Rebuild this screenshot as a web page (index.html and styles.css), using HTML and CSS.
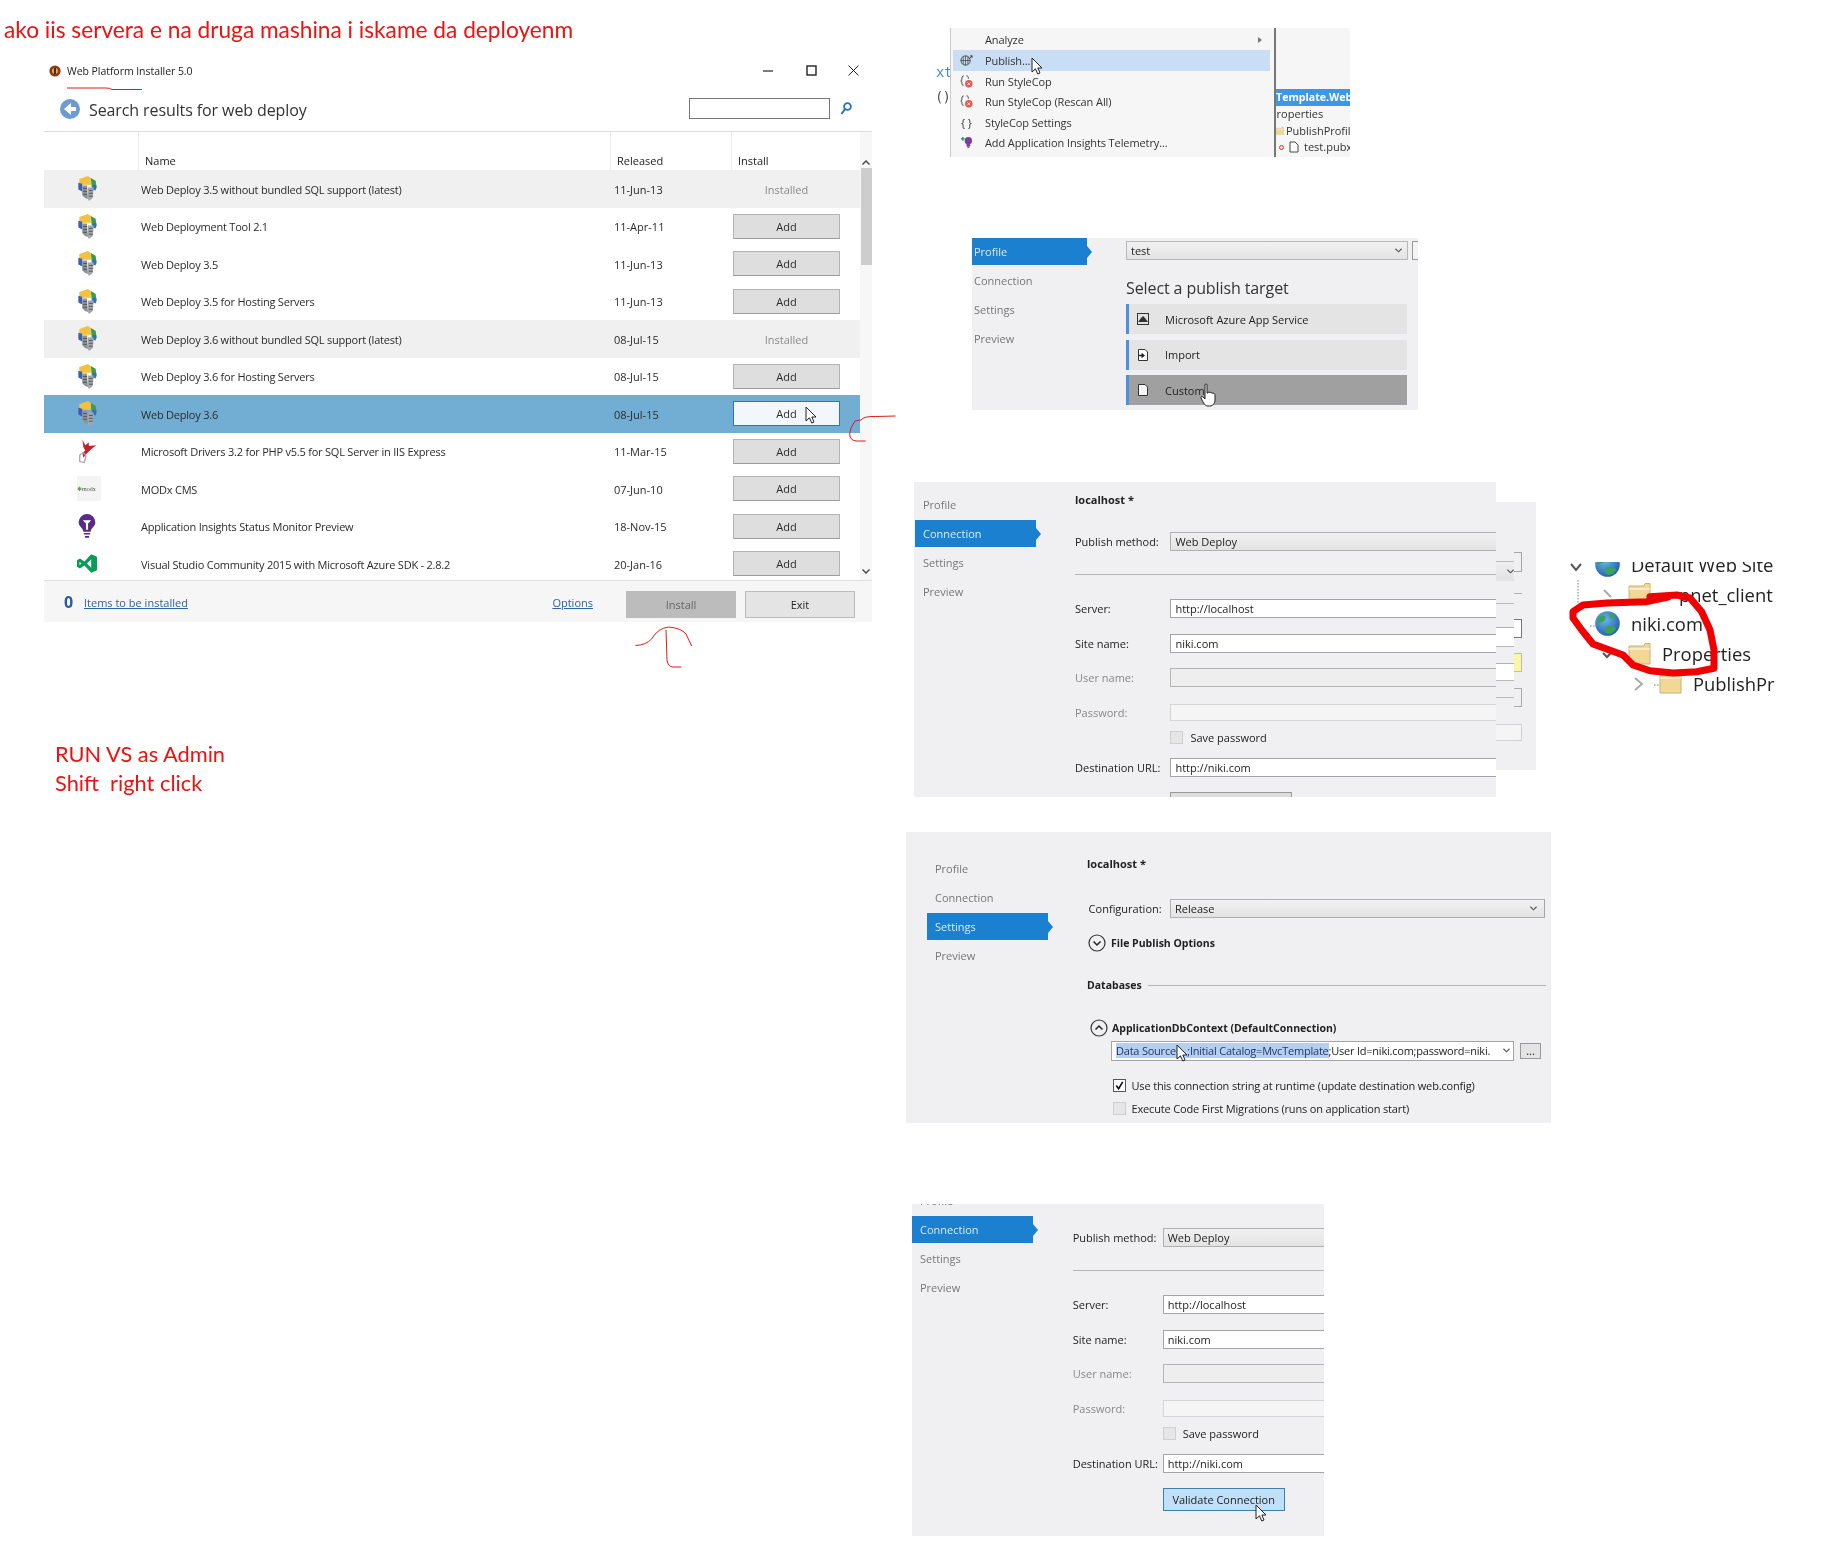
FILE: index.html
```html
<!DOCTYPE html>
<html lang="en">
<head>
<meta charset="utf-8">
<title>Deploy notes</title>
<link rel="stylesheet" href="styles.css">
</head>
<body>
<svg class="defs" width="0" height="0" aria-hidden="true">
  <defs>
    <radialGradient id="gl" cx="40%" cy="35%" r="70%"><stop offset="0" stop-color="#6db4ea"/><stop offset="1" stop-color="#1f5fae"/></radialGradient>
    <symbol id="deploy" viewBox="0 0 20 26">
      <path d="M2 3 L11 0 L14 2 L14 9 L5 9 L2 7Z" fill="#f2c23c"/>
      <path d="M14 2 L19 5 L20 13 L15 13Z" fill="#3f9a4a"/>
      <path d="M1 7 L5 8 L5 16 L1 14Z" fill="#3c5fb0"/>
      <path d="M16 9 L20 10 L19 15 L16 14Z" fill="#2f6fc0"/>
      <path d="M5 10 H10 L11 24 L8 23 L5 20Z" fill="#8d9296"/>
      <path d="M11 12 H17 L16 23 L12 26 L11 24Z" fill="#a3a7aa"/>
      <path d="M6 13 H10 M6 16 H10 M6 19 H10 M12 15 H16 M12 18 H16 M12 21 H16" stroke="#4f5357" stroke-width="1"/>
    </symbol>
    <symbol id="splat" viewBox="0 0 22 26">
      <path d="M6 0 L9 6 L13 3 L13 7 L21 6 L15 11 L11 15 L7 20 L6 15 L9 12 L7 8Z" fill="#c6202e"/>
      <path d="M3 17 L7 14 L10 18 L8 25 L3 24Z" fill="none" stroke="#a8a8a8" stroke-width="1.4"/>
    </symbol>
    <symbol id="bulb" viewBox="0 0 16 24">
      <path d="M8 0 A8 8 0 0 1 16 8 C16 12 12 13 11.5 17 H4.5 C4 13 0 12 0 8 A8 8 0 0 1 8 0Z" fill="#5a2a86"/>
      <path d="M4 6 H12 L9 9 V15 H7 V9Z" fill="#fff"/>
      <path d="M5 19 H11 M6 22 H10" stroke="#5a2a86" stroke-width="1.6"/>
    </symbol>
    <symbol id="vs" viewBox="0 0 24 22">
      <path fill-rule="evenodd" fill="#0b9a58" d="M17 0 L24 3 V19 L17 22 L9 13.5 L3.5 17 L0 15 V7 L3.5 5 L9 8.5Z M17 6 L12 11 L17 16Z M3 9 V13 L5.5 11Z"/>
    </symbol>
    <symbol id="cursor" viewBox="0 0 12 18">
      <path d="M1 1 V15 L4.4 11.8 L6.8 17 L9 16 L6.8 11 H11Z" fill="#fff" stroke="#222" stroke-width="1"/>
    </symbol>
    <symbol id="hand" viewBox="0 0 16 24">
      <path d="M5 2 C5 0.5 7 0.5 7 2 V10 L8 10 C8 8.5 10 8.5 10 10 C10 9 12 9 12 10.5 C12 10 15 10 15 12 V17 C15 20 13 23 10 23 H8 C5 23 4 21 1 15 C0.5 13.5 2 13 3 14 L5 16Z" fill="#fff" stroke="#222" stroke-width="1"/>
    </symbol>
    <symbol id="globe" viewBox="0 0 25 25">
      <circle cx="12.5" cy="12.5" r="12.3" fill="url(#gl)"/>
      <path d="M4 6 C8 3 12 5 10 9 C8 12 5 10 4 13 C2 11 3 8 4 6Z M14 2 C18 3 20 5 20 8 C17 9 14 6 14 2Z M10 16 C14 14 20 14 21 18 C18 23 13 24 10 21Z" fill="#3aa35a"/>
    </symbol>
    <symbol id="folder" viewBox="0 0 23 22">
      <path d="M1 3 H16 L17 0.5 H22 V21 H1Z" fill="#f2d795" stroke="#c9b27a" stroke-width="1"/>
      <path d="M1 6 H22" stroke="#fff" stroke-width="1"/>
    </symbol>
    <symbol id="chev-d" viewBox="0 0 18 18">
      <circle cx="9" cy="9" r="8" fill="none" stroke="#333" stroke-width="1.2"/>
      <path d="M5.5 7.5 L9 11 L12.5 7.5" fill="none" stroke="#222" stroke-width="1.5"/>
    </symbol>
    <symbol id="chev-u" viewBox="0 0 18 18">
      <circle cx="9" cy="9" r="8" fill="none" stroke="#333" stroke-width="1.2"/>
      <path d="M5.5 10.5 L9 7 L12.5 10.5" fill="none" stroke="#222" stroke-width="1.5"/>
    </symbol>
    <symbol id="stylecop" viewBox="0 0 14 14">
      <path d="M4 1 C2 1 2 3 2 5 L1 6.5 L2 8 C2 10 2 11 4 11" fill="none" stroke="#333" stroke-width="1"/>
      <path d="M7 1 C9 1 9 2 9 4" fill="none" stroke="#333" stroke-width="1"/>
      <circle cx="9.5" cy="9.5" r="4" fill="#e4574f"/>
      <path d="M8 8 L11 11 M11 8 L8 11" stroke="#fff" stroke-width="1"/>
    </symbol>
    <symbol id="dd" viewBox="0 0 8 5">
      <path d="M.5 .5 L4 4 L7.5 .5" fill="none" stroke="#555" stroke-width="1.3"/>
    </symbol>
  </defs>
</svg>

<main class="canvas">
  <p class="note note-top">ako iis servera e na druga mashina i iskame da deployenm</p>
  <p class="note note-admin">RUN VS as Admin<br>Shift&nbsp; right click</p>

  <!-- Web Platform Installer -->
  <section class="shot win">
    <header class="win-title">
      <svg class="win-logo" viewBox="0 0 12 12"><circle cx="6" cy="6" r="5.6" fill="#8a3b12"/><circle cx="6" cy="6" r="3" fill="#e9a25d"/><path d="M6 3 V9" stroke="#5b240a" stroke-width="2"/></svg>
      <span class="win-name">Web Platform Installer 5.0</span>
      <span class="win-controls">
        <svg width="11" height="11" viewBox="0 0 11 11"><path d="M0 6 H10" stroke="#222" stroke-width="1.2"/></svg>
        <svg width="11" height="11" viewBox="0 0 11 11"><rect x="1" y="1" width="9" height="9" fill="none" stroke="#222" stroke-width="1.4"/></svg>
        <svg width="11" height="11" viewBox="0 0 11 11"><path d="M0.5 0.5 L10.5 10.5 M10.5 0.5 L0.5 10.5" stroke="#222" stroke-width="1"/></svg>
      </span>
    </header>
    <div class="win-head">
      <svg class="back" viewBox="0 0 20 20"><circle cx="10" cy="10" r="10" fill="#6b9bd0"/><path d="M11 4 V8 H16 V12 H11 V16 L4 10Z" fill="#fff"/></svg>
      <h1 class="win-h">Search results for web deploy</h1>
      <span class="search-box"></span>
      <svg class="mag" viewBox="0 0 12 13"><circle cx="7.5" cy="4.5" r="3.4" fill="none" stroke="#2a6fb0" stroke-width="1.8"/><path d="M5 7 L1.5 12" stroke="#2a6fb0" stroke-width="2"/></svg>
    </div>
    <div class="win-body">
      <div class="table">
        <div class="thead"><span class="th th-blank"></span><span class="th">Name</span><span class="th">Released</span><span class="th">Install</span></div>
        <div class="tbody">
          <div class="tr tr-done"><svg class="ic"><use href="#deploy"/></svg><span class="nm">Web Deploy 3.5 without bundled SQL support (latest)</span><span class="dt">11-Jun-13</span><span class="installed">Installed</span></div>
          <div class="tr"><svg class="ic"><use href="#deploy"/></svg><span class="nm">Web Deployment Tool 2.1</span><span class="dt">11-Apr-11</span><button class="add">Add</button></div>
          <div class="tr"><svg class="ic"><use href="#deploy"/></svg><span class="nm">Web Deploy 3.5</span><span class="dt">11-Jun-13</span><button class="add">Add</button></div>
          <div class="tr"><svg class="ic"><use href="#deploy"/></svg><span class="nm">Web Deploy 3.5 for Hosting Servers</span><span class="dt">11-Jun-13</span><button class="add">Add</button></div>
          <div class="tr tr-done"><svg class="ic"><use href="#deploy"/></svg><span class="nm">Web Deploy 3.6 without bundled SQL support (latest)</span><span class="dt">08-Jul-15</span><span class="installed">Installed</span></div>
          <div class="tr"><svg class="ic"><use href="#deploy"/></svg><span class="nm">Web Deploy 3.6 for Hosting Servers</span><span class="dt">08-Jul-15</span><button class="add">Add</button></div>
          <div class="tr tr-sel"><svg class="ic"><use href="#deploy"/></svg><span class="nm">Web Deploy 3.6</span><span class="dt">08-Jul-15</span><button class="add add-sel">Add</button></div>
          <div class="tr"><svg class="ic"><use href="#splat"/></svg><span class="nm">Microsoft Drivers 3.2 for PHP v5.5 for SQL Server in IIS Express</span><span class="dt">11-Mar-15</span><button class="add">Add</button></div>
          <div class="tr"><span class="modx"><i>&#10033;</i>modx</span><span class="nm">MODx CMS</span><span class="dt">07-Jun-10</span><button class="add">Add</button></div>
          <div class="tr"><svg class="ic"><use href="#bulb"/></svg><span class="nm">Application Insights Status Monitor Preview</span><span class="dt">18-Nov-15</span><button class="add">Add</button></div>
          <div class="tr"><svg class="ic"><use href="#vs"/></svg><span class="nm">Visual Studio Community 2015 with Microsoft Azure SDK - 2.8.2</span><span class="dt">20-Jan-16</span><button class="add">Add</button></div>
        </div>
      </div>
      <div class="sbar">
        <svg class="sarrow" viewBox="0 0 8 5"><path d="M0.5 4.5 L4 1 L7.5 4.5" fill="none" stroke="#444" stroke-width="1.4"/></svg>
        <span class="sthumb"></span>
        <svg class="sarrow sarrow-end" viewBox="0 0 8 5"><path d="M0.5 0.5 L4 4 L7.5 0.5" fill="none" stroke="#444" stroke-width="1.4"/></svg>
      </div>
    </div>
    <footer class="win-foot">
      <b class="count">0</b>
      <a class="link">Items to be installed</a>
      <a class="link link-opt">Options</a>
      <button class="fbtn fbtn-off">Install</button>
      <button class="fbtn">Exit</button>
    </footer>
  </section>

  <!-- Context menu -->
  <section class="shot ctx">
    <div class="ctx-code"><span>xt</span><span>()</span></div>
    <ul class="menu">
      <li class="mi"><span></span><span>Analyze</span><i class="sub"></i></li>
      <li class="mi mi-hot"><svg class="mic" viewBox="0 0 14 14"><circle cx="6" cy="7" r="5" fill="none" stroke="#444"/><path d="M1 7 H11 M6 2 V12 M3.5 3 V11 M8.5 3 V11" stroke="#444" stroke-width=".8"/><path d="M10 5 L13 2 M11 2 H13 V4" stroke="#333" fill="none"/></svg><span>Publish...</span></li>
      <li class="mi"><svg class="mic"><use href="#stylecop"/></svg><span>Run StyleCop</span></li>
      <li class="mi"><svg class="mic"><use href="#stylecop"/></svg><span>Run StyleCop (Rescan All)</span></li>
      <li class="mi"><span class="mic mic-b">{ }</span><span>StyleCop Settings</span></li>
      <li class="mi"><svg class="mic" viewBox="0 0 14 14"><path d="M1 3 H5 M3 1 V5" stroke="#2c9a4b" stroke-width="1.4"/><circle cx="9" cy="5" r="4" fill="#7b3fa0"/><path d="M7.5 9 H10.5 V11 H7.5Z M8 12.5 H10" fill="#7b3fa0" stroke="#7b3fa0"/></svg><span>Add Application Insights Telemetry...</span></li>
    </ul>
    <div class="tree-mini">
      <span class="tm-sel">Template.Web</span>
      <span class="tm-props">Properties</span>
      <span class="tm-item"><svg class="tm-fold"><use href="#folder"/></svg>PublishProfil</span>
      <span class="tm-file"><i class="dot"></i><svg class="tm-page" viewBox="0 0 11 12"><path d="M2 1 H7 L10 4 V11 H2Z" fill="#fff" stroke="#444"/></svg>test.pubx</span>
    </div>
  </section>

  <!-- Publish target -->
  <section class="shot pub p-target">
    <nav class="nav">
      <span class="nav-i nav-on">Profile</span>
      <span class="nav-i">Connection</span>
      <span class="nav-i">Settings</span>
      <span class="nav-i">Preview</span>
    </nav>
    <div class="target">
      <div class="t-top"><span class="field field-sel t-combo">test<svg class="dd"><use href="#dd"/></svg></span><span class="t-new"></span></div>
      <h2 class="t-h">Select a publish target</h2>
      <div class="card"><svg class="card-ic" viewBox="0 0 12 12"><rect x=".5" y=".5" width="11" height="11" fill="#e3e3e3" stroke="#333"/><path d="M1 9 L4 5 L6 3 L8 5 L11 9Z" fill="#333"/></svg><span>Microsoft Azure App Service</span></div>
      <div class="card"><svg class="card-ic" viewBox="0 0 12 12"><path d="M1.5 .5 H8 L10.5 3 V11.5 H1.5Z" fill="#fff" stroke="#333"/><path d="M2 6.5 H6 M4.5 4.5 L7 6.5 L4.5 8.5" stroke="#222" stroke-width="1.3" fill="none"/></svg><span>Import</span></div>
      <div class="card card-on"><svg class="card-ic" viewBox="0 0 12 12"><path d="M1.5 .5 H8 L10.5 3 V11.5 H1.5Z" fill="#f5f5f5" stroke="#333"/></svg><span>Custom</span></div>
    </div>
  </section>

  <!-- Connection (behind) -->
  <section class="shot back-panel">
    <div class="bp-col bp-left">
      <span class="frag bl1"><svg class="dd"><use href="#dd"/></svg></span>
      <span class="frag bl2"></span>
      <span class="frag bl3"></span>
      <span class="frag bl4"></span>
      <span class="frag bl5"></span>
      <span class="frag bl6"></span>
    </div>
    <div class="bp-col bp-right">
      <span class="frag br1"></span>
      <span class="frag br2"></span>
      <span class="frag br3"></span>
      <span class="frag br4"></span>
      <span class="frag br5"></span>
      <span class="frag br6"></span>
    </div>
  </section>

  <!-- Connection -->
  <section class="shot pub p-conn">
    <nav class="nav">
      <span class="nav-i">Profile</span>
      <span class="nav-i nav-on">Connection</span>
      <span class="nav-i">Settings</span>
      <span class="nav-i">Preview</span>
    </nav>
    <div class="form">
      <h2 class="f-title">localhost *</h2>
      <div class="f-row"><label>Publish method:</label><span class="field field-sel">Web Deploy</span></div>
      <hr class="f-line">
      <div class="f-row f-server"><label>Server:</label><span class="field">http://localhost</span></div>
      <div class="f-row"><label>Site name:</label><span class="field">niki.com</span></div>
      <div class="f-row f-off"><label>User name:</label><span class="field field-off"></span></div>
      <div class="f-row f-off f-pass"><label>Password:</label><span class="field field-off2"></span></div>
      <div class="f-save"><span class="check"></span><span>Save password</span></div>
      <div class="f-row f-dest"><label>Destination URL:</label><span class="field">http://niki.com</span></div>
      <div class="f-btnrow"><span class="vbtn vbtn-cut"></span></div>
    </div>
  </section>

  <!-- Settings -->
  <section class="shot pub p-set">
    <nav class="nav">
      <span class="nav-i">Profile</span>
      <span class="nav-i">Connection</span>
      <span class="nav-i nav-on">Settings</span>
      <span class="nav-i">Preview</span>
    </nav>
    <div class="set">
      <h2 class="f-title">localhost *</h2>
      <div class="s-conf"><label>Configuration:</label><span class="field field-sel">Release<svg class="dd"><use href="#dd"/></svg></span></div>
      <div class="s-exp"><svg width="18" height="18"><use href="#chev-d"/></svg><b>File Publish Options</b></div>
      <div class="s-db"><b>Databases</b><hr></div>
      <div class="s-ctx"><svg width="18" height="18"><use href="#chev-u"/></svg><b>ApplicationDbContext (DefaultConnection)</b></div>
      <div class="s-conn">
        <span class="field s-str"><span class="s-text"><mark>Data Source=&nbsp;&nbsp;;Initial Catalog=MvcTemplate</mark>;User Id=niki.com;password=niki.</span><svg class="dd"><use href="#dd"/></svg></span>
        <span class="dots">...</span>
      </div>
      <div class="s-chk"><span class="check check-on"><svg viewBox="0 0 12 12"><path d="M2.5 6 L5 9.5 L9.5 2" fill="none" stroke="#111" stroke-width="1.8"/></svg></span><span>Use this connection string at runtime (update destination web.config)</span></div>
      <div class="s-chk s-chk2"><span class="check"></span><span>Execute Code First Migrations (runs on application start)</span></div>
    </div>
  </section>

  <!-- Validate -->
  <section class="shot pub p-val">
    <nav class="nav">
      <span class="nav-i">Profile</span>
      <span class="nav-i nav-on">Connection</span>
      <span class="nav-i">Settings</span>
      <span class="nav-i">Preview</span>
    </nav>
    <div class="form">
      <div class="f-row"><label>Publish method:</label><span class="field field-sel">Web Deploy</span></div>
      <hr class="f-line">
      <div class="f-row f-server"><label>Server:</label><span class="field">http://localhost</span></div>
      <div class="f-row"><label>Site name:</label><span class="field">niki.com</span></div>
      <div class="f-row f-off"><label>User name:</label><span class="field field-off"></span></div>
      <div class="f-row f-off f-pass"><label>Password:</label><span class="field field-off2"></span></div>
      <div class="f-save"><span class="check"></span><span>Save password</span></div>
      <div class="f-row f-dest"><label>Destination URL:</label><span class="field">http://niki.com</span></div>
      <div class="f-btnrow"><span class="vbtn">Validate Connection</span></div>
    </div>
  </section>

  <!-- IIS tree -->
  <section class="shot iis">
    <div class="iis-row r0"><svg class="globe"><use href="#globe"/></svg><span>Default Web Site</span></div>
    <div class="iis-row r1"><svg class="fold"><use href="#folder"/></svg><span>pnet_client</span></div>
    <div class="iis-row r2"><svg class="globe"><use href="#globe"/></svg><span>niki.com</span></div>
    <div class="iis-row r3"><svg class="fold"><use href="#folder"/></svg><span>Properties</span></div>
    <div class="iis-row r4"><svg class="fold"><use href="#folder"/></svg><span>PublishPr</span></div>
  </section>

  <!-- Pointers -->
  <svg class="ptr ptr-add"><use href="#cursor"/></svg>
  <svg class="ptr ptr-pub"><use href="#cursor"/></svg>
  <svg class="ptr ptr-hand"><use href="#hand"/></svg>
  <svg class="ptr ptr-data"><use href="#cursor"/></svg>
  <svg class="ptr ptr-val"><use href="#cursor"/></svg>

  <!-- Red pen annotations and tree connectors -->
  <svg class="pen" viewBox="0 0 1844 1552">
    <path class="tree-dark" d="M1571 564 L1576 570 L1581 564"/>
    <path class="tree-dots" d="M1578 580 V604 M1590 626 H1595 M1654 685 H1659"/>
    <path class="tree-grey" d="M1604 590 L1611 597 M1635 678 L1642 684 L1635 690"/>
    <path class="tree-dark" d="M1603 653 L1607 657 L1611 653"/>
    <path class="thin" d="M67 88 H106 Q110 88 112 89.5 H142"/>
    <path class="thin" d="M635.5 645.5 Q646 645 651.6 639 Q658 628 668.8 627 Q681 628 686 634 L691.7 646"/>
    <path class="thin" d="M666 630 L667 660 Q668 667 673 667 L681.4 667"/>
    <path class="thin" d="M895.5 416 L875.4 416.5 Q864 416 861 420 L855 421 Q850 428 849.6 434 Q850 441 857 441 L865.7 441"/>
    <path class="thick" d="M1650 596.7 L1676.7 595 L1690 598 L1701.7 611.7 L1710 630 L1714 650 L1714 668.3 L1696.7 671.7 L1673 673 L1650 670.7 L1633 665 L1623 655 L1606.7 649 L1593 644 L1581.7 630 L1573 618 L1573 611.7 L1583 605 L1606.7 603 L1646.7 601.7 L1668 597"/>
  </svg>
</main>
</body>
</html>
```

FILE: styles.css
```css
* { box-sizing: border-box; }
html, body { margin: 0; padding: 0; background: #fff; }
body { font-family: "Open Sans", "Noto Sans", sans-serif; font-size: 11px; color: #222; }
.defs { position: absolute; }
.canvas { position: relative; width: 1844px; height: 1552px; overflow: hidden; }
p, h1, h2, ul { margin: 0; padding: 0; font-weight: normal; }
hr { margin: 0; border: 0; }
button { font: inherit; color: inherit; padding: 0; }
label { display: block; }

.note { position: absolute; font-family: "Lato", "Liberation Sans", sans-serif; color: #ee1111; white-space: nowrap; filter: blur(.25px); }
.note-top { left: 4px; top: 17px; line-height: 26px; font-size: 22.7px; }
.note-admin { left: 55px; top: 739px; line-height: 29px; font-size: 21.8px; }

.shot { position: absolute; overflow: hidden; filter: blur(.3px); }

/* Web Platform Installer */
.win { left: 44px; top: 60px; width: 828px; height: 562px; display: flex; flex-direction: column; background: #fff; }
.win-title { height: 21px; padding: 0 13px 0 5px; display: flex; align-items: center; gap: 6px; }
.win-logo { width: 12px; height: 12px; flex: none; }
.win-name { font-size: 10.5px; letter-spacing: -.05px; }
.win-controls { margin-left: auto; display: flex; gap: 31.5px; }
.win-head { height: 51px; padding: 9px 20px 4px 16px; display: flex; align-items: center; border-bottom: 1px solid #dcdcdc; }
.back { width: 20px; height: 20px; flex: none; }
.win-h { font-size: 16px; margin: 3px 0 0 9px; color: #333; letter-spacing: -.1px; }
.search-box { margin-left: auto; width: 141px; height: 21px; border: 1px solid #777; background: #fff; }
.mag { width: 12px; height: 13px; margin-left: 10px; }
.win-body { flex: 1; display: flex; min-height: 0; }
.table { width: 816px; display: flex; flex-direction: column; }
.thead { height: 38px; display: grid; grid-template-columns: 94px 472px 121px 1fr; align-items: stretch; }
.th { border-left: 1px solid #ececec; padding: 19px 0 0 6px; line-height: 20px; }
.th-blank { border: 0; }
.tbody { flex: 1; overflow: hidden; }
.tr { height: 37.5px; display: grid; grid-template-columns: 97px 473px 119px 107px; align-items: center; color: #2b2b2b; }
.tr-done { background: #f0f0f1; }
.tr-sel { background: #72aed4; }
.nm { letter-spacing: -.22px; padding-top: 1px; white-space: nowrap; }
.dt { padding-top: 1px; }
.ic { width: 20px; height: 25px; margin-left: 32.5px; }
.modx { margin-left: 33px; width: 24px; height: 25px; background: #f4f4f4; font-size: 6px; display: flex; align-items: center; font-family: "Liberation Serif", serif; color: #555; }
.modx i { color: #5aa33c; font-style: normal; }
.installed { text-align: center; color: #8a8a8a; padding-top: 1px; }
.add { height: 25px; width: 107px; background: #dedede; border: 1px solid #b4b4b4; border-bottom-color: #9c9c9c; }
.add-sel { background: #f1f7fd; border-color: #2f74b5; }
.sbar { width: 12px; background: #f7f7f7; padding-top: 28px; display: flex; flex-direction: column; align-items: center; }
.sarrow { width: 8px; height: 5px; flex: none; }
.sthumb { width: 11px; height: 97px; background: #cdcdcd; margin-top: 3px; flex: none; }
.sarrow-end { margin-top: auto; margin-bottom: 6px; }
.win-foot { height: 42px; flex: none; background: #f6f6f6; border-top: 1px solid #e0e0e0; display: flex; align-items: center; padding: 0 17px 0 20px; }
.count { font-size: 16px; color: #2a5a9c; width: 20px; margin-top: 1px; }
.link { color: #2b63a5; text-decoration: underline; margin-top: 2px; }
.link-opt { margin-left: auto; }
.fbtn { width: 110px; height: 27px; margin-left: 9px; background: #e4e4e4; border: 1px solid #bcbcbc; margin-top: 5px; }
.fbtn-off { margin-left: 33px; background: #bcbcbc; color: #666; }

/* Context menu */
.ctx { left: 935px; top: 28px; width: 415px; height: 129px; display: flex; background: #fff; }
.ctx-code { width: 15px; flex: none; display: flex; flex-direction: column; padding: 35px 0 0 1px; gap: 7px; font-family: "DejaVu Sans Mono", monospace; font-size: 14px; color: #555; line-height: 18px; white-space: nowrap; }
.ctx-code span:first-child { color: #4a8fa8; letter-spacing: -.5px; }
.ctx-code span:last-child { letter-spacing: -1px; margin-left: -1px; }
.menu { width: 324px; flex: none; list-style: none; background: #f6f6f6; border-left: 1px solid #c9c9c9; padding: 1.7px 4px 0 2px; display: flex; flex-direction: column; }
.mi { height: 20.6px; display: grid; grid-template-columns: 32px 1fr auto; align-items: center; font-size: 11px; letter-spacing: -.1px; color: #333; }
.mi-hot { background: #c9def5; }
.mic { width: 13px; height: 13px; margin-left: 7px; }
.mic-b { width: auto; height: auto; font-size: 11px; margin-left: 8px; }
.sub { width: 0; height: 0; border-left: 4px solid #777; border-top: 3.5px solid transparent; border-bottom: 3.5px solid transparent; margin-right: 8px; }
.tree-mini { flex: 1; min-width: 0; background: #f6f6f6; border-left: 2px solid #777; padding-top: 60.5px; display: flex; flex-direction: column; font-size: 11px; white-space: nowrap; overflow: hidden; color: #333; }
.tm-sel { background: #3d96e6; color: #fff; font-weight: 700; height: 17.5px; line-height: 17.5px; font-size: 10.6px; }
.tm-props { margin-left: -6px; line-height: 16.5px; }
.tm-item { line-height: 16.5px; display: flex; align-items: center; gap: 2px; }
.tm-fold { width: 8px; height: 14px; flex: none; }
.tm-file { line-height: 16.5px; display: flex; align-items: center; gap: 5px; padding-left: 3px; }
.tm-page { width: 11px; height: 12px; flex: none; }
.dot { width: 5px; height: 5px; border: 1.5px solid #c33; border-radius: 50%; flex: none; margin-right: -1px; }

/* Publish wizard */
.pub { background: #f0f0f2; display: flex; }
.nav { flex: none; display: flex; flex-direction: column; color: #777; }
.nav-i { height: 27px; line-height: 27px; margin-bottom: 2px; position: relative; padding-left: var(--nav-pad); flex: none; }
.nav-on { background: #1a80cf; color: #d7ecfb; width: var(--nav-w); }
.nav-on::after { content: ""; position: absolute; left: 100%; top: 8px; border-left: 5px solid #1a80cf; border-top: 6px solid transparent; border-bottom: 6px solid transparent; }
.field { display: flex; align-items: center; justify-content: space-between; height: 100%; background: #fff; border: 1px solid #a5a5a5; border-right: 0; padding: 0 4px; white-space: nowrap; color: #222; }
.field-sel { background: linear-gradient(#f1f1f1, #e3e3e3); border-color: #b0b0b0; }
.field-off { background: #eeeeee; border-color: #b4b4b4; }
.field-off2 { background: #f5f5f5; border-color: #d5d5d5; }
.dd { width: 7px; height: 5px; flex: none; margin: 0 3px; }
.check { width: 13px; height: 13px; background: #e6e6e6; border: 1px solid #cfcfcf; flex: none; display: block; }
.check-on { background: #fff; border-color: #555; }
.check-on svg { display: block; }

.p-target { left: 972px; top: 238px; width: 446px; height: 172px; --nav-pad: 2px; --nav-w: 115px; }
.p-target .nav { width: 154px; }
.target { flex: 1; min-width: 0; padding-top: 3px; }
.t-top { display: flex; height: 19px; gap: 3.5px; }
.t-combo { width: 282px; flex: none; border: 1px solid #b8b8b8; padding-right: 2px; }
.t-new { width: 7px; flex: none; border: 1px solid #999; border-right: 0; background: #f4f4f4; }
.t-h { font-size: 16px; line-height: 22px; margin: 17px 0 5px; color: #333; white-space: nowrap; letter-spacing: -.1px; }
.card { width: 280.5px; height: 30px; margin-bottom: 5.7px; background: #e4e4e4; border-left: 3px solid #4a8fe0; padding-left: 8px; display: flex; align-items: center; gap: 16px; font-size: 11px; color: #222; }
.card-on { background: #a0a0a0; }
.card-ic { width: 12px; height: 12px; flex: none; }

.back-panel { left: 1496px; top: 502px; width: 40px; height: 268px; background: #f0f0f2; display: flex; }
.bp-col { flex: none; display: flex; flex-direction: column; }
.bp-left { width: 18px; }
.bp-right { width: 8px; }
.frag { display: block; flex: none; }
.bl1 { height: 20px; margin-top: 59px; border-top: 1px solid #bbb; background: linear-gradient(#eeeeee, #e2e2e2); display: flex; align-items: center; justify-content: flex-end; }
.bl1 .dd { margin: 0; }
.bl2 { height: 1px; margin-top: 21.7px; background: #b8b8b8; }
.bl3 { height: 20px; margin-top: 23.3px; background: #fff; border-top: 1px solid #b0b0b0; border-bottom: 1px solid #b8b8b8; }
.bl4 { height: 18.6px; margin-top: 15.7px; background: #fff; border-top: 1px solid #b0b0b0; border-bottom: 1px solid #b8b8b8; }
.bl5 { height: 1px; margin-top: 16px; background: #b8b8b8; }
.bl6 { height: 17px; margin-top: 26px; background: #f5f5f5; border-top: 1px solid #d5d5d5; border-bottom: 1px solid #d5d5d5; }
.br1 { height: 20px; margin-top: 50px; border: 1px solid #a5a5a5; border-left: 0; }
.br2 { height: 1px; margin-top: 21px; background: #b0b0b0; }
.br3 { height: 19.3px; margin-top: 25px; background: #fff; border: 1px solid #777; border-left: 0; }
.br4 { height: 19px; margin-top: 15px; background: #fbf7a0; border: 1px solid #bbb; border-left: 0; }
.br5 { height: 19px; margin-top: 16px; border: 1px solid #aaa; border-left: 0; }
.br6 { height: 17px; margin-top: 17px; background: #f5f5f5; border: 1px solid #d0d0d0; border-left: 0; }

.form { flex: 1; min-width: 0; display: flex; flex-direction: column; }
.f-title { font-size: 11px; font-weight: 700; line-height: 17px; color: #222; }
.f-row { display: grid; grid-template-columns: var(--lab) 1fr; height: 19px; align-items: center; flex: none; }
.f-off { color: #888; }
.f-line { height: 1px; background: #b4b4b4; margin: 22.5px 0 0; flex: none; }
.f-server { margin-top: 24.5px; }
.f-row + .f-row { margin-top: 15.5px; }
.f-pass { height: 17px; }
.f-row.f-pass { margin-top: 17px; }
.f-save { display: flex; align-items: center; gap: 7px; margin: 10.5px 0 0 var(--lab); height: 12px; flex: none; }
.f-row.f-dest, .f-save + .f-dest { margin-top: 14.5px; }
.f-btnrow { margin: 15px 0 0 var(--lab); flex: none; }
.vbtn { display: block; width: 122px; height: 23px; line-height: 21px; text-align: center; background: #bfe0f8; border: 1px solid #3b80b0; color: #222; }
.vbtn-cut { background: #ddd; border-color: #999; }

.p-conn { left: 914px; top: 482px; width: 582px; height: 315px; --nav-pad: 8px; --nav-w: 121px; --lab: 95.4px; }
.p-conn .nav { width: 161px; padding: 9px 0 0 1px; }
.p-conn .form { padding-top: 9px; }
.p-conn .f-title { margin-bottom: 24px; }

.p-val { left: 912px; top: 1204px; width: 412px; height: 332px; --nav-pad: 8px; --nav-w: 121px; --lab: 90px; }
.p-val .nav { width: 160.7px; margin-top: -17px; }
.p-val .form { padding-top: 24px; }

.p-set { left: 906px; top: 832px; width: 644.5px; height: 291px; --nav-pad: 8px; --nav-w: 121px; }
.p-set .nav { width: 181px; padding: 23px 0 0 21px; }
.set { flex: 1; min-width: 0; padding: 22.5px 6px 0 0; display: flex; flex-direction: column; }
.s-conf { display: grid; grid-template-columns: 81.4px 1fr; height: 19px; align-items: center; margin: 27px 0 0 1.6px; flex: none; }
.s-conf .field { border-right: 1px solid #a5a5a5; }
.s-exp, .s-ctx { display: flex; align-items: center; gap: 5px; font-weight: 700; flex: none; height: 18px; }
.s-exp b, .s-ctx b { font-weight: 700; font-size: 10.5px; }
.s-exp { margin: 16px 0 0 1px; }
.s-db { display: flex; align-items: center; gap: 6px; margin-top: 25px; flex: none; height: 17px; }
.s-db b { font-size: 10.5px; }
.s-db hr { flex: 1; height: 1px; background: #b4b4b4; margin-right: -1.5px; }
.s-ctx { margin: 25px 0 0 3px; gap: 4px; }
.s-conn { display: flex; gap: 6.4px; align-items: center; margin: 4px 0 0 24px; height: 20px; flex: none; }
.s-str { width: 402.6px; border-right: 1px solid #a5a5a5; flex: none; padding: 0; overflow: hidden; }
.s-text { overflow: hidden; padding-left: 4px; letter-spacing: -.22px; }
.s-str mark { background: #b6cfee; color: #1d3a6a; }
.dots { width: 21px; height: 16px; background: #e4e4e4; border: 1px solid #999; line-height: 14px; text-align: center; flex: none; }
.s-chk { display: flex; align-items: center; gap: 6px; height: 13px; margin: 18px 0 0 25.5px; flex: none; letter-spacing: -.16px; }
.s-chk2 { margin-top: 10.5px; }

/* IIS tree */
.iis { left: 1570px; top: 562px; width: 208px; height: 140px; background: #fff; font-family: "Open Sans", sans-serif; font-size: 18.4px; color: #222; display: flex; flex-direction: column; }
.iis-row { flex: none; height: 29.6px; display: flex; align-items: center; white-space: nowrap; }
.globe { width: 25px; height: 25px; flex: none; margin-left: 25px; margin-right: 11px; }
.fold { width: 23px; height: 22px; flex: none; margin-left: 58px; }
.r0 { margin-top: -12px; }
.r1 span { margin-left: 28px; }
.r3 span { margin-left: 11px; }
.r4 .fold { margin-left: 89px; }
.r4 span { margin-left: 11px; }

/* Pointers */
.ptr { position: absolute; display: block; }
.ptr-add { left: 805px; top: 406px; width: 12px; height: 18px; }
.ptr-pub { left: 1031px; top: 57px; width: 12px; height: 18px; }
.ptr-hand { left: 1200px; top: 383px; width: 16px; height: 24px; }
.ptr-data { left: 1176px; top: 1044px; width: 12px; height: 18px; }
.ptr-val { left: 1255px; top: 1504px; width: 12px; height: 18px; }

.pen { position: absolute; left: 0; top: 0; width: 1844px; height: 1552px; pointer-events: none; }
.thin { fill: none; stroke: #e01a1a; stroke-width: 1; }
.thick { fill: none; stroke: #f00000; stroke-width: 7; stroke-linejoin: round; stroke-linecap: round; }
.tree-dark { fill: none; stroke: #555; stroke-width: 2; }
.tree-grey { fill: none; stroke: #aaa; stroke-width: 2; }
.tree-dots { fill: none; stroke: #777; stroke-width: 1; stroke-dasharray: 1.5 1.5; }
```
